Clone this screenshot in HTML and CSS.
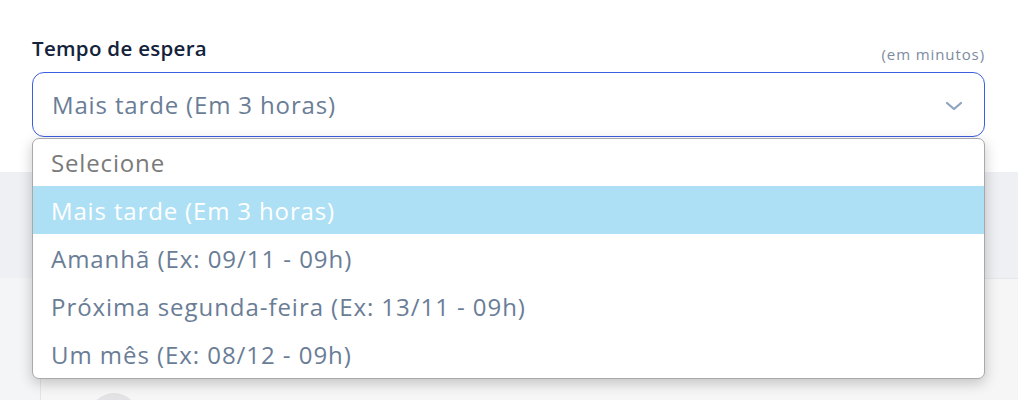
FILE: index.html
```html
<!DOCTYPE html>
<html lang="pt">
<head>
<meta charset="utf-8">
<link rel="stylesheet" href="styles.css">
</head>
<body>
<div class="page">
  <div class="top">
    <div class="field">
      <div class="labels">
        <span class="label">Tempo de espera</span>
        <span class="hint">(em minutos)</span>
      </div>
      <div class="select">
        <span class="value">Mais tarde (Em 3 horas)</span>
        <svg class="chev" width="18" height="10" viewBox="0 0 18 10"><path d="M2 2 L9 8 L16 2" fill="none" stroke="#8fa2c0" stroke-width="2.2" stroke-linecap="round" stroke-linejoin="round"/></svg>
      </div>
      <ul class="menu">
        <li class="opt placeholder">Selecione</li>
        <li class="opt active">Mais tarde (Em 3 horas)</li>
        <li class="opt">Amanhã (Ex: 09/11 - 09h)</li>
        <li class="opt">Próxima segunda-feira (Ex: 13/11 - 09h)</li>
        <li class="opt">Um mês (Ex: 08/12 - 09h)</li>
      </ul>
    </div>
  </div>
  <div class="below">
    <div class="card1"></div>
    <div class="card2">
      <div class="avatar"></div>
    </div>
  </div>
</div>
</body>
</html>
```
FILE: styles.css
```css
* { box-sizing: border-box; }
html, body { margin: 0; padding: 0; }
body {
  width: 1018px;
  height: 400px;
  overflow: hidden;
  background: #ffffff;
  font-family: "Open Sans", "Noto Sans", sans-serif;
}
.page { display: flex; flex-direction: column; height: 400px; overflow: hidden; }
.top {
  height: 172px;
  flex: none;
  padding: 30px 33px 0 32px;
  background: #ffffff;
}
.field { position: relative; }
.labels {
  display: flex;
  justify-content: space-between;
  align-items: flex-end;
  height: 42px;
  padding-bottom: 12px;
}
.label {
  font-size: 20.5px;
  color: #14223b;
  line-height: 24px;
  font-weight: 600;
  letter-spacing: 0.3px;
}
.hint {
  font-size: 15px;
  color: #7d8ba1;
  line-height: 16px;
  margin-bottom: -2px;
  letter-spacing: 0.9px;
}
.select {
  height: 65px;
  border: 1px solid #3c5ee0;
  border-radius: 12px;
  display: flex;
  align-items: center;
  justify-content: space-between;
  padding: 0 21px 0 19px;
  background: #ffffff;
}
.value { font-size: 24px; color: #6a7d96; letter-spacing: 0.85px; }
.chev { margin-top: 2px; }
.menu {
  position: absolute;
  left: 0;
  right: 0;
  top: 108px;
  margin: 0;
  padding: 0;
  list-style: none;
  background: #ffffff;
  border: 1px solid #a9a9a9;
  border-radius: 7px;
  box-shadow: 0 4px 14px rgba(0, 0, 0, 0.22);
  overflow: hidden;
  z-index: 5;
}
.opt {
  height: 48px;
  display: flex;
  align-items: center;
  padding-left: 18px;
  font-size: 24px;
  color: #6a7d96;
  letter-spacing: 0.95px;
}
.opt.placeholder { color: #7a7a7a; height: 47px; letter-spacing: 0.85px; }
.opt.active { background: #ade0f5; color: #ffffff; letter-spacing: 0.85px; }
.below {
  flex: 1;
  background: #f4f5f7;
  display: flex;
  flex-direction: column;
  padding: 0 0 0 40px;
  overflow: hidden;
}
.card1 {
  height: 106px;
  flex: none;
  margin-left: -40px;
  background: #eef0f4;
}
.card2 {
  flex: 1;
  border-left: 1px solid #e2e4e8;
  border-top: 1px solid #e6e7ea;
  background: #f6f6f7;
  position: relative;
}
.avatar {
  position: absolute;
  left: 48px;
  top: 114px;
  width: 50px;
  height: 50px;
  border-radius: 50%;
  background: #e3e3e5;
}
```
